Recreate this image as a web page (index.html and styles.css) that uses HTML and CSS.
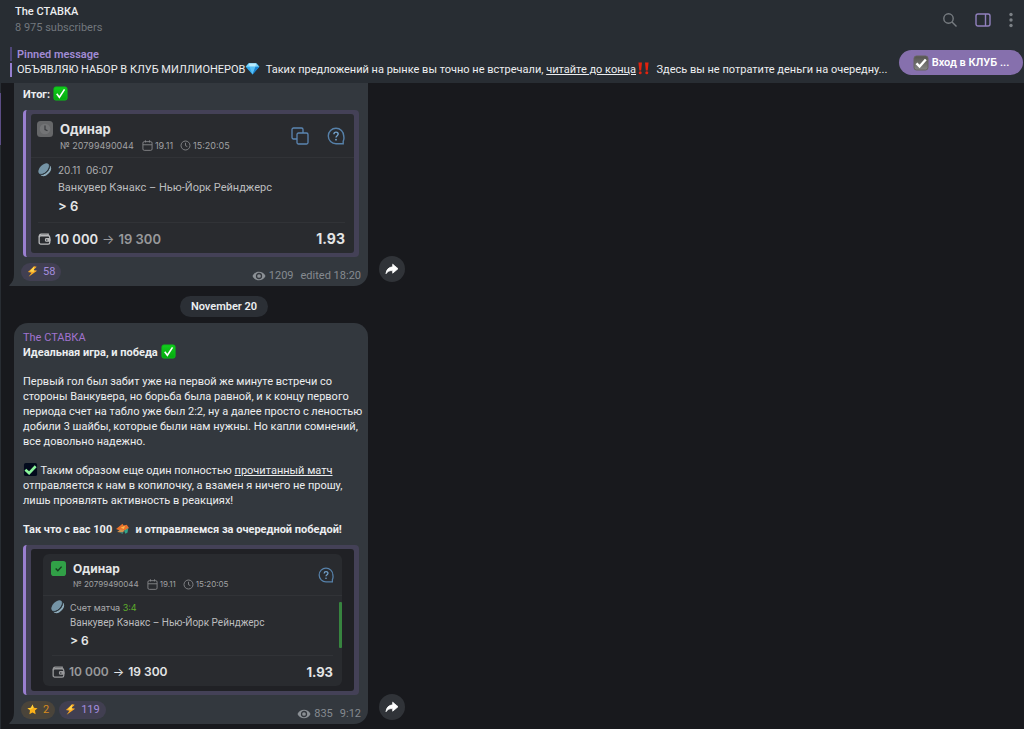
FILE: index.html
```html
<!DOCTYPE html>
<html lang="ru">
<head>
<meta charset="utf-8">
<meta name="viewport" content="width=device-width, initial-scale=1">
<title>The СТАВКА</title>
<link rel="stylesheet" href="styles.css">
</head>
<body>
<svg class="defs" aria-hidden="true">
  <defs>
    <linearGradient id="gGreen" x1="0" y1="0" x2="0" y2="1"><stop offset="0" stop-color="#12cf1d"/><stop offset="1" stop-color="#04a80d"/></linearGradient>
    <linearGradient id="gGrey" x1="0" y1="0" x2="0" y2="1"><stop offset="0" stop-color="#55544f"/><stop offset="1" stop-color="#858585"/></linearGradient>
    <symbol id="check-green" viewBox="0 0 16 16"><rect x="1" y="1" width="14" height="14" rx="2" fill="url(#gGreen)" stroke="#0bbf18"/><path d="M4 8.2 6.8 12 12.3 3.6" fill="none" stroke="#fff" stroke-width="1.7"/></symbol>
    <symbol id="check-grey" viewBox="0 0 16 16"><rect x="1" y="1" width="14" height="14" rx="2.5" fill="url(#gGrey)" stroke="#666460"/><path d="M3.5 8.3 6.6 11.5 12.8 4.5" fill="none" stroke="#fff" stroke-width="2.4"/></symbol>
    <symbol id="check-dark" viewBox="0 0 16 16"><rect x="1" y="1" width="14" height="14" rx="2" fill="#020a1c"/><path d="M2.5 8.3 6.5 11.8 13.5 4.5" fill="none" stroke="#8af39a" stroke-width="2.8"/></symbol>
    <symbol id="diamond" viewBox="0 0 16 16"><path d="M4 2.5h8L15.3 6 8 14.5.7 6z" fill="#32a8ea"/><path d="M4 2.5 4.8 6H.7zM12 2.5 11.2 6h4.1z" fill="#79d5fb"/><path d="M4 2.5h8L11.2 6H4.8z" fill="#b9edff"/><path d="M4.8 6h6.4L8 14.5z" fill="#58c0f5"/><path d="M11.2 6h4.1L8 14.5z" fill="#1a81cf"/></symbol>
    <symbol id="bangs" viewBox="0 0 14 16"><path d="M1.6 1.5h3.8L4.5 10h-2zM8.6 1.5h3.8L11.5 10h-2z" fill="#e3220e"/><circle cx="3.5" cy="12.6" r="1.6" fill="#e3220e"/><circle cx="10.5" cy="12.6" r="1.6" fill="#e3220e"/></symbol>
    <symbol id="bolt" viewBox="0 0 12 12"><path d="M7.8.3 1 6.6l3.8.8-3 4.3L11 5.2l-3.9-.8L10.6.9z" fill="#f9a825"/><path d="M7.8.3 3.1 5.6l4.2 1z" fill="#ffd54c"/></symbol>
    <symbol id="star" viewBox="0 0 12 12"><path d="m6 .5 1.6 3.5 3.9.5-2.8 2.7.7 3.9L6 9.2l-3.4 1.9.7-3.9L.5 4.5 4.4 4z" fill="#fbb118"/><path d="m6 .5 1 3.6-3 2L.5 4.5 4.4 4z" fill="#ffd13e"/></symbol>
    <symbol id="bird" viewBox="0 0 14 12"><path d="M1 6.5 5 3.2 7 1.5l1 1.6 3-.6 2 3-3 2.2L5 8z" fill="#e8722c"/><path d="m5.3 5.3 4-1.8-1 3z" fill="#ffbb4c"/><path d="M2 9.2 5 7l4 .3L7.2 10z" fill="#d2934f"/><path d="m8.5 8 3.8-2.2-.6 4-2 1.2z" fill="#30a58b"/><path d="M4 9.5h4l-1 1.6z" fill="#3b8175"/></symbol>
    <symbol id="eye" viewBox="0 0 14 10"><path d="M.5 5C2 2 4.300.7 7 .7S12 2 13.500 5C12 8 9.700 9.300 7 9.300S2 8 .5 5z" fill="#8b9095"/><circle cx="7" cy="5" r="2.5" fill="none" stroke="#34383e" stroke-width="1.3"/></symbol>
    <symbol id="share" viewBox="0 0 14 12"><path d="M7.700 1.200 13 5.700 7.700 10.200V7.600C4.500 7.400 2.600 8.300 1 10.700 1.300 6.700 3.700 4.200 7.700 3.800z" fill="#fff" stroke="#fff" stroke-width=".8" stroke-linejoin="round"/></symbol>
    <symbol id="calendar" viewBox="0 0 12 12"><g fill="none" stroke="#85878a"><rect x="1" y="1.800" width="10" height="9.500" rx="1.500"/><path d="M1 5.200h10M3.700.3v2.400M8.300.3v2.400"/></g></symbol>
    <symbol id="clock" viewBox="0 0 12 12"><g fill="none" stroke="#85878a"><circle cx="6" cy="6" r="4.900"/><path d="M6 3v3.200l2 1"/></g></symbol>
    <symbol id="puck" viewBox="0 0 14 14"><g transform="rotate(-45 7 7)"><ellipse cx="7" cy="5.200" rx="6.600" ry="3.800" fill="#7594a6"/><path d="M.4 6.500v2C1.500 11.300 4 12 7 12s5.500-.7 6.600-3.500v-2C12.500 9 10 10 7 10S1.500 9 .4 6.500z" fill="#8eabba"/><path d="M.5 6.600C2 9 4.500 9.500 7 9.500s5-.5 6.500-2.900" fill="none" stroke="#25323a" stroke-width=".8"/></g></symbol>
    <symbol id="wallet" viewBox="0 0 14 13"><g fill="none" stroke="currentColor" stroke-width="1.400"><rect x="1.200" y="3" width="11.500" height="9" rx="1.800"/><path d="M1.200 4.500C1.200 2 2 1.200 3.500 1.200H11V3"/></g><rect x="7.500" y="5.500" width="6" height="4" rx="1.500" fill="currentColor"/><circle cx="9.500" cy="7.500" r=".8" fill="#292b2f"/></symbol>
    <symbol id="copy" viewBox="0 0 18 18"><g fill="none" stroke="#5b86b3" stroke-width="1.300"><path d="M6 12H2.500A1.500 1.500 0 0 1 1 10.500v-8A1.500 1.500 0 0 1 2.500 1h8A1.500 1.500 0 0 1 12 2.500V6"/><rect x="6" y="6" width="11" height="11" rx="1.500"/></g></symbol>
    <symbol id="help" viewBox="0 0 18 18"><path d="M16.700 9A7.700 7.700 0 1 0 9 16.700h7.200v-2.500A7.700 7.700 0 0 0 16.700 9z" fill="none" stroke="#5681aa" stroke-width="1.400"/><path d="M6.900 7.200C7 4.500 11.200 4.500 11.200 7.100 11.200 8.700 9 8.700 9 10.500" fill="none" stroke="#73a2cc" stroke-width="1.400"/><circle cx="9" cy="12.700" r=".9" fill="#73a2cc"/></symbol>
    <symbol id="status-wait" viewBox="0 0 16 16"><rect width="16" height="16" rx="3.500" fill="#666769"/><circle cx="8" cy="8" r="5.300" fill="#737476"/><path d="M8 4.500V8.500l2.500 1.200" fill="none" stroke="#393b3e" stroke-width="1.200"/></symbol>
    <symbol id="status-win" viewBox="0 0 16 16"><rect width="16" height="16" rx="3" fill="#31a047"/><path d="m5 8 2.300 2.300L11.300 6" fill="none" stroke="#153d20" stroke-width="1.500"/></symbol>
    <symbol id="tail" viewBox="0 0 6 12"><path d="M6 0v12H1C.2 12 0 11.300.7 10.700 3.500 8.500 5 5 5 0z" fill="#33383e"/></symbol>
  </defs>
</svg>

<div class="app">
  <aside class="rail"><span class="rail-mark"></span></aside>
  <div class="chat">
    <header class="topbar">
      <div class="who">
        <h1 class="title">The СТАВКА</h1>
        <p class="subs">8 975 subscribers</p>
      </div>
      <div class="tools">
        <button class="tool" aria-label="Search"><svg width="16" height="16" viewBox="0 0 16 16"><g fill="none" stroke="#777c81" stroke-width="1.400"><circle cx="6.500" cy="6.500" r="4.700"/><path d="m10 10 4.500 4.500"/></g></svg></button>
        <button class="tool" aria-label="Side panel"><svg width="16" height="16" viewBox="0 0 16 16"><g fill="none" stroke="#9180be" stroke-width="1.400"><rect x="1" y="2" width="14" height="12" rx="2"/><path d="M10.500 2v12"/></g></svg></button>
        <button class="tool tool-menu" aria-label="Menu"><svg width="6" height="16" viewBox="0 0 6 16"><g fill="#7b8086"><circle cx="3" cy="2.500" r="1.700"/><circle cx="3" cy="8" r="1.700"/><circle cx="3" cy="13.500" r="1.700"/></g></svg></button>
      </div>
    </header>

    <section class="pinned">
      <div class="pin-bars"><span class="pin-bar pin-bar-dim"></span><span class="pin-bar"></span></div>
      <div class="pin-body">
        <p class="pin-label">Pinned message</p>
        <p class="pin-text">ОБЪЯВЛЯЮ НАБОР В КЛУБ МИЛЛИОНЕРОВ<svg class="emoji"><use href="#diamond"/></svg>&nbsp; Таких предложений на рынке вы точно не встречали, <a class="link" href="#">читайте до конца</a><svg class="emoji"><use href="#bangs"/></svg>&nbsp; Здесь вы не потратите деньги на очередну...</p>
      </div>
      <button class="join"><svg class="join-ico"><use href="#check-grey"/></svg><span>Вход в КЛУБ ...</span></button>
    </section>

    <main class="feed">
      <div class="row">
        <article class="bubble bubble-cut">
          <p class="text strong">Итог: <svg class="emoji"><use href="#check-green"/></svg></p>
          <div class="media">
            <div class="ticket">
              <div class="t-head">
                <svg class="t-status"><use href="#status-wait"/></svg>
                <div class="t-info">
                  <p class="t-title">Одинар</p>
                  <p class="t-sub"><span class="t-num">№ 20799490044</span><svg class="t-mini"><use href="#calendar"/></svg><span class="t-date">19.11</span><svg class="t-mini"><use href="#clock"/></svg><span>15:20:05</span></p>
                </div>
                <svg class="t-act"><use href="#copy"/></svg>
                <svg class="t-act"><use href="#help"/></svg>
              </div>
              <div class="t-body">
                <svg class="t-puck"><use href="#puck"/></svg>
                <div class="t-match">
                  <p class="t-when">20.11 &nbsp;06:07</p>
                  <p class="t-teams">Ванкувер Кэнакс – Нью-Йорк Рейнджерс</p>
                  <p class="t-bet">&gt; 6</p>
                </div>
              </div>
              <div class="t-foot">
                <svg class="t-wallet"><use href="#wallet"/></svg>
                <span>10 000</span><span class="arrow muted">→</span><span class="muted">19 300</span>
                <span class="t-odds">1.93</span>
              </div>
            </div>
          </div>
          <footer class="meta">
            <button class="react"><svg class="r-ico"><use href="#bolt"/></svg>58</button>
            <p class="info"><svg class="eye"><use href="#eye"/></svg><span>1209</span><time>edited 18:20</time></p>
          </footer>
          <svg class="tail"><use href="#tail"/></svg>
        </article>
        <button class="share" aria-label="Share"><svg width="14" height="12"><use href="#share"/></svg></button>
      </div>

      <p class="day">November 20</p>

      <div class="row">
        <article class="bubble">
          <p class="text author">The СТАВКА</p>
          <p class="text strong">Идеальная игра, и победа <svg class="emoji"><use href="#check-green"/></svg></p>
          <p class="text para">Первый гол был забит уже на первой же минуте встречи со<br>стороны Ванкувера, но борьба была равной, и к концу первого<br>периода счет на табло уже был 2:2, ну а далее просто с леностью<br>добили 3 шайбы, которые были нам нужны. Но капли сомнений,<br>все довольно надежно.</p>
          <p class="text para"><svg class="emoji"><use href="#check-dark"/></svg> Таким образом еще один полностью <a class="link" href="#">прочитанный матч</a><br>отправляется к нам в копилочку, а взамен я ничего не прошу,<br>лишь проявлять активность в реакциях!</p>
          <p class="text para strong">Так что с вас 100 <svg class="emoji"><use href="#bird"/></svg>&nbsp; и отправляемся за очередной победой!</p>
          <div class="media">
            <div class="frame">
              <div class="ticket ticket-small">
                <div class="t-head">
                  <svg class="t-status"><use href="#status-win"/></svg>
                  <div class="t-info">
                    <p class="t-title">Одинар</p>
                    <p class="t-sub"><span class="t-num">№ 20799490044</span><svg class="t-mini"><use href="#calendar"/></svg><span class="t-date">19.11</span><svg class="t-mini"><use href="#clock"/></svg><span>15:20:05</span></p>
                  </div>
                  <svg class="t-act"><use href="#help"/></svg>
                </div>
                <div class="t-body">
                  <svg class="t-puck"><use href="#puck"/></svg>
                  <div class="t-match">
                    <p class="t-when">Счет матча <span class="score">3:4</span></p>
                    <p class="t-teams">Ванкувер Кэнакс – Нью-Йорк Рейнджерс</p>
                    <p class="t-bet">&gt; 6</p>
                  </div>
                  <span class="win-bar"></span>
                </div>
                <div class="t-foot">
                  <svg class="t-wallet muted"><use href="#wallet"/></svg>
                  <span class="muted">10 000</span><span class="arrow">→</span><span>19 300</span>
                  <span class="t-odds">1.93</span>
                </div>
              </div>
            </div>
          </div>
          <footer class="meta">
            <button class="react react-gold"><svg class="r-ico"><use href="#star"/></svg>2</button>
            <button class="react"><svg class="r-ico"><use href="#bolt"/></svg>119</button>
            <p class="info"><svg class="eye"><use href="#eye"/></svg><span>835</span><time>9:12</time></p>
          </footer>
          <svg class="tail"><use href="#tail"/></svg>
        </article>
        <button class="share" aria-label="Share"><svg width="14" height="12"><use href="#share"/></svg></button>
      </div>
    </main>
  </div>
</div>
</body>
</html>
```
FILE: styles.css
```css
* { box-sizing: border-box; }

body {
  margin: 0;
  background: #18191d;
  color: #eceef0;
  font-family: Roboto, "Open Sans", sans-serif;
  font-size: 11px;
  line-height: 15px;
}

h1, p { margin: 0; }
svg { flex: none; }

button {
  padding: 0;
  border: 0;
  background: none;
  color: inherit;
  font: inherit;
  cursor: pointer;
}

.defs { position: absolute; width: 0; height: 0; }

.app { display: flex; height: 100vh; overflow: hidden; }

.rail { width: 1px; padding-top: 93px; background: #282d33; }
.rail-mark { display: block; height: 52px; background: #5c4d85; }

.chat { display: flex; flex: 1; flex-direction: column; min-width: 0; }

/* Header */
.topbar {
  display: flex;
  flex: none;
  justify-content: space-between;
  padding: 4px 10px 8px 14px;
  background: #282d33;
}
.title { font-size: 11px; font-weight: 500; line-height: 16px; }
.subs { color: #72777d; line-height: 16px; }
.tools { display: flex; align-items: center; gap: 17px; }
.tool { display: flex; }

.pinned {
  display: flex;
  flex: none;
  gap: 5px;
  padding: 3px 1px 6px 9px;
  background: #282d33;
}
.pin-bars { display: flex; flex-direction: column; gap: 2px; width: 2px; }
.pin-bar { flex: 1; background: #957fcf; }
.pin-bar-dim { background: #50477a; }
.pin-body { flex: 1; min-width: 0; }
.pin-label { color: #a18bd6; font-weight: 600; }
.pin-text { white-space: nowrap; }
.join {
  display: flex;
  align-items: center;
  justify-content: center;
  gap: 3px;
  width: 124px;
  height: 25px;
  margin-top: 3px;
  border-radius: 13px;
  background: #8670ad;
  color: #fff;
  font-weight: 600;
}
.join-ico { width: 16px; height: 16px; }

.link { color: inherit; text-decoration: underline; }
.emoji { width: 15px; height: 15px; margin: -2px 0; vertical-align: -1px; }

/* Messages */
.feed { display: flex; flex: 1; flex-direction: column; min-height: 0; padding-left: 13px; }
.row { display: flex; flex: none; align-items: flex-end; gap: 11px; }
.bubble {
  position: relative;
  width: 354px;
  padding: 7px 9px 0;
  border-radius: 14px 14px 14px 0;
  background: #33383e;
}
.bubble-cut { padding-top: 4px; border-top-left-radius: 0; border-top-right-radius: 0; }
.tail { position: absolute; bottom: 0; left: -5px; width: 6px; height: 12px; }
.text.strong { font-weight: 700; }
.text.author { color: #a173cf; }
.para { margin-top: 14px; white-space: nowrap; }

.media {
  margin-top: 8px;
  padding: 4px 5px;
  border-left: 3px solid #9a7fd0;
  border-radius: 4px;
  background: #444157;
}

.meta { display: flex; align-items: center; gap: 4px; height: 29px; }
.react {
  display: flex;
  align-items: center;
  gap: 5px;
  height: 18px;
  padding: 0 6px;
  border-radius: 9px;
  background: #413f51;
  color: #a48ddd;
}
.react:first-child { margin-left: -2px; }
.react-gold { background: #4a443a; color: #d68a1e; }
.r-ico { width: 11px; height: 11px; }
.info {
  display: flex;
  align-items: center;
  gap: 3px;
  margin: 8px -2px 0 auto;
  color: #858a90;
}
.info time { margin-left: 4px; }
.eye { width: 14px; height: 10px; }

.share {
  display: flex;
  align-items: center;
  justify-content: center;
  width: 26px;
  height: 26px;
  margin-bottom: 4px;
  border-radius: 50%;
  background: #303338;
}
.day {
  width: 88px;
  margin: 10px 0 6px 166px;
  border-radius: 11px;
  background: #2b2f35;
  font-weight: 600;
  line-height: 21px;
  text-align: center;
}

/* Bet ticket */
.ticket {
  border-radius: 3px;
  background: #292b2f;
  color: #e4e5e6;
  font-family: Inter, sans-serif;
}
.t-head {
  display: flex;
  gap: 18px;
  padding: 6px 9px 4px 6px;
  border-bottom: 1px solid #313337;
}
.t-status { width: 16px; height: 16px; margin: 1px -11px 0 0; }
.t-info { flex: 1; }
.t-title { font-size: 13px; font-weight: 700; line-height: 18px; }
.t-sub { display: flex; align-items: center; gap: 2px; color: #a0a1a3; font-size: 9px; }
.t-num { margin-right: 6px; }
.t-date { margin-right: 5px; }
.t-mini { width: 11px; height: 11px; }
.t-act { width: 18px; height: 18px; margin-top: 7px; }
.t-body { display: flex; gap: 6px; padding: 5px 0 7px 7px; color: #bcbdbf; }
.t-puck { width: 14px; height: 14px; }
.t-match { flex: 1; }
.t-when { color: #adaeb0; font-size: 10px; }
.t-teams { margin-top: 2px; font-family: Roboto, sans-serif; font-size: 11px; }
.t-bet { margin-top: 2px; color: #e4e5e6; font-size: 13px; font-weight: 600; line-height: 18px; }
.t-foot {
  display: flex;
  align-items: center;
  gap: 4px;
  margin: 0 9px 0 7px;
  padding: 7px 0 5px;
  border-top: 1px solid #313337;
  font-size: 13px;
  font-weight: 600;
  line-height: 18px;
}
.t-wallet { width: 13px; height: 12px; color: #b9babc; }
.muted { color: #98999b; }
.arrow { font-weight: 400; }
.t-odds { margin-left: auto; font-size: 14px; font-weight: 700; }

.frame { padding: 5px 12px; border-radius: 3px; background: #202125; }
.ticket-small { border-radius: 6px; }
.ticket-small .t-head { padding: 6px 8px 4px; }
.ticket-small .t-status { width: 15px; height: 15px; }
.ticket-small .t-title { font-size: 12px; line-height: 17px; }
.ticket-small .t-sub { font-size: 8px; line-height: 14px; }
.ticket-small .t-act { width: 16px; height: 16px; }
.ticket-small .t-body { gap: 5px; padding: 4px 0 5px 8px; }
.ticket-small .t-when { font-size: 9px; }
.ticket-small .t-teams { margin-top: 0; font-size: 10px; }
.ticket-small .t-bet { font-size: 12px; }
.ticket-small .t-foot { margin-left: 9px; font-size: 12px; }
.ticket-small .t-odds { font-size: 13px; }
.score { color: #5fae2c; }
.win-bar { width: 3px; margin: 2px 0; border-radius: 1px; background: #37843f; }
```
